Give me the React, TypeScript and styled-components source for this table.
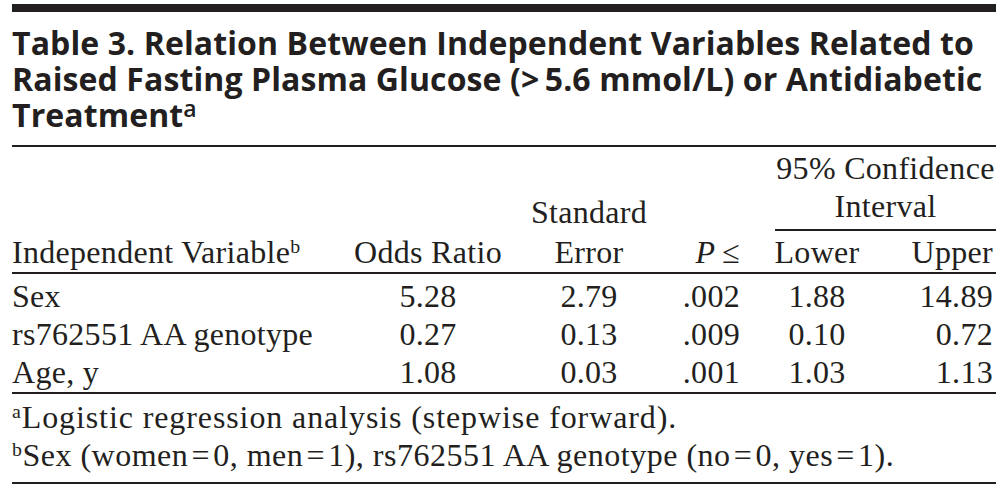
import React from "react";
import styled, { createGlobalStyle } from "styled-components";

const GlobalStyle = createGlobalStyle`
	body {
		margin: 0;
		background: #ffffff;
	}
`;

const ink = "#231f20";
const columns = "340px 152px 170px 78px 130px 114px";

const Page = styled.div`
	width: 984px;
	padding: 4px 12px 0;
	color: ${ink};
`;

const TopBar = styled.div`
	height: 8px;
	background: ${ink};
`;

const Title = styled.h1`
	margin: 0;
	padding: 13px 0 12px;
	font-family: "Open Sans", sans-serif;
	font-weight: 700;
	font-size: 32px;
	line-height: 36px;
	letter-spacing: 0.1px;
	border-bottom: 2px solid ${ink};
	span {
		display: block;
		height: 36px;
		white-space: nowrap;
	}
`;

const TitleSup = styled.sup`
	font-size: 0.72em;
	vertical-align: 0.42em;
	line-height: 0;
	font-weight: 600;
`;

const Grid = styled.div`
	display: grid;
	grid-template-columns: ${columns};
	font-family: "Liberation Serif", serif;
	font-size: 32px;
	line-height: 38px;
	letter-spacing: 0.3px;
	white-space: nowrap;
`;

const Head = styled(Grid)`
	padding: 2px 0 1px;
	row-gap: 2px;
	border-bottom: 2px solid ${ink};
`;

const Body = styled(Grid)`
	padding: 3px 0 1px;
	border-bottom: 2px solid ${ink};
`;

type Align = "left" | "center" | "right";

const Cell = styled.div<{ $align?: Align; $pad?: number; $col?: string; $end?: boolean }>`
	text-align: ${(p) => p.$align || "left"};
	padding-right: ${(p) => p.$pad || 0}px;
	grid-column: ${(p) => p.$col || "auto"};
	align-self: ${(p) => (p.$end ? "end" : "start")};
`;

const SpanHead = styled.div`
	grid-column: 5 / 7;
	margin-left: 23px;
	padding-bottom: 4px;
	text-align: center;
	border-bottom: 2px solid ${ink};
`;

const Sup = styled.sup`
	font-size: 0.62em;
	vertical-align: 0.5em;
	line-height: 0;
`;

const Italic = styled.i`
	font-style: italic;
`;

const Notes = styled.div`
	padding: 4px 0 8px;
	font-family: "Liberation Serif", serif;
	font-size: 32px;
	line-height: 38px;
	border-bottom: 2px solid ${ink};
`;

const Note = styled.p<{ $spacing: number }>`
	margin: 0;
	white-space: nowrap;
	letter-spacing: ${(p) => p.$spacing}px;
`;

const rows = [
	["Sex", "5.28", "2.79", ".002", "1.88", "14.89"],
	["rs762551 AA genotype", "0.27", "0.13", ".009", "0.10", "0.72"],
	["Age, y", "1.08", "0.03", ".001", "1.03", "1.13"],
];

const aligns: Align[] = ["left", "center", "center", "right", "center", "right"];
const pads = [0, 0, 0, 12, 0, 3];

export default function App() {
	return (
		<Page>
			<GlobalStyle />
			<TopBar />
			<Title>
				<span>Table 3. Relation Between Independent Variables Related to</span>
				<span>Raised Fasting Plasma Glucose (&gt;&#8201;5.6 mmol/L) or Antidiabetic</span>
				<span>
					Treatment<TitleSup>a</TitleSup>
				</span>
			</Title>
			<Head>
				<Cell $col="3" $align="center" $end>
					Standard
				</Cell>
				<SpanHead>
					95% Confidence
					<br />
					Interval
				</SpanHead>
				<Cell $col="1">
					Independent Variable<Sup>b</Sup>
				</Cell>
				<Cell $align="center">Odds Ratio</Cell>
				<Cell $align="center">Error</Cell>
				<Cell $align="right" $pad={12}>
					<Italic>P</Italic>&#8201;≤
				</Cell>
				<Cell $align="center">Lower</Cell>
				<Cell $align="right" $pad={3}>
					Upper
				</Cell>
			</Head>
			<Body>
				{rows.map((row) =>
					row.map((value, i) => (
						<Cell key={row[0] + i} $align={aligns[i]} $pad={pads[i]}>
							{value}
						</Cell>
					))
				)}
			</Body>
			<Notes>
				<Note $spacing={0.9}>
					<Sup>a</Sup>Logistic regression analysis (stepwise forward).
				</Note>
				<Note $spacing={0.5}>
					<Sup>b</Sup>Sex (women&#8202;=&#8202;0, men&#8202;=&#8202;1), rs762551 AA genotype (no&#8202;=&#8202;0,
					yes&#8202;=&#8202;1).
				</Note>
			</Notes>
		</Page>
	);
}
